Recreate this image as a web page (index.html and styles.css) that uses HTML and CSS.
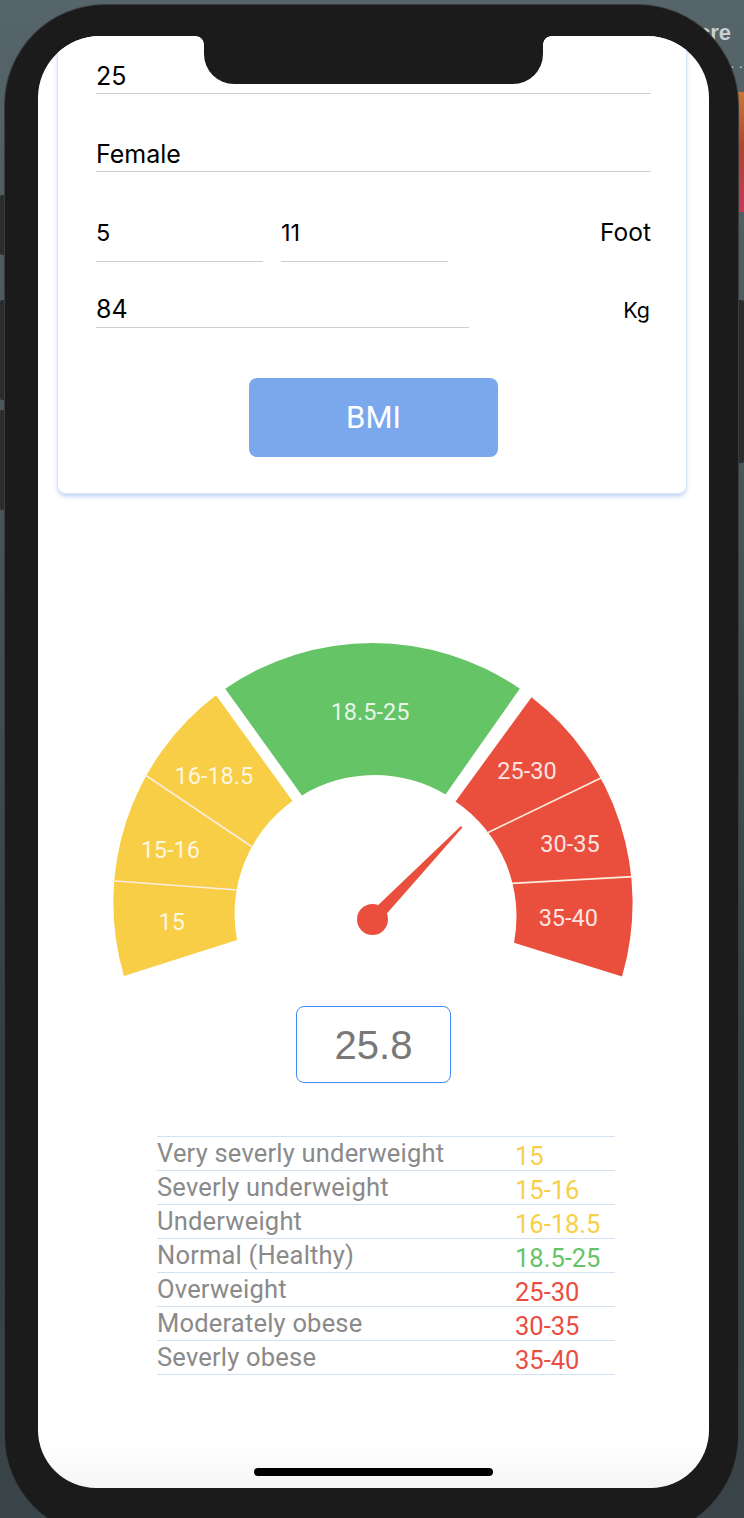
FILE: index.html
```html
<!DOCTYPE html>
<html lang="en">
<head>
<meta charset="utf-8">
<title>BMI</title>
<link rel="stylesheet" href="styles.css">
</head>
<body>
  <div class="desk-text">cre</div>
  <div class="desk-dots">· ·</div>
  <div class="desk-window"></div>
  <div class="side-btn sb1"></div>
  <div class="side-btn sb2"></div>
  <div class="side-btn sb3"></div>
  <div class="side-btn sb4"></div>

  <div class="phone">
    <div class="screen">
      <div class="notch"></div>

      <div class="card">
        <div class="field big">25</div>
        <div class="field big gap-female">Female</div>
        <div class="row-height">
          <div class="field small half">5</div>
          <div class="field small half">11</div>
          <div class="unit foot">Foot</div>
        </div>
        <div class="row-weight">
          <div class="field big weight">84</div>
          <div class="unit kg">Kg</div>
        </div>
        <div class="bmi-btn">BMI</div>
      </div>

      <svg class="gauge" width="544" height="360" viewBox="100 630 544 360" xmlns="http://www.w3.org/2000/svg">
        <path class="seg-yellow" d="M 124 976 A 260 260 0 0 1 216 695.3 L 292.5 801 A 139 139 0 0 0 237 940 Z"/>
        <path class="seg-green" d="M 225.2 688.7 A 260 260 0 0 1 519.8 688.7 L 445.5 794.5 A 139 139 0 0 0 301.9 795.4 Z"/>
        <path class="seg-red" d="M 531.5 697.3 A 260 260 0 0 1 622 976.5 L 514 942.7 A 139 139 0 0 0 455.5 801.5 Z"/>
        <path class="sep" d="M 112 880.7 L 238 890 M 144.5 774.5 L 253 847.5 M 602 777.5 L 486 833.5 M 633 876.6 L 512 883.4"/>
        <text class="glabel" x="171.7" y="930">15</text>
        <text class="glabel" x="170.3" y="858">15-16</text>
        <text class="glabel" x="213.8" y="784">16-18.5</text>
        <text class="glabel" x="370" y="720">18.5-25</text>
        <text class="glabel" x="527" y="779">25-30</text>
        <text class="glabel" x="570" y="851.5">30-35</text>
        <text class="glabel" x="568.3" y="925.5">35-40</text>
        <polygon class="needle" points="377.2,924.4 462.4,827.4 461,826 367.8,914.9"/>
        <circle class="needle" cx="372.5" cy="919.5" r="15.5"/>
      </svg>

      <div class="result">25.8</div>

      <div class="legend">
        <div class="lrow"><span class="lname">Very severly underweight</span><span class="lval c-yellow">15</span></div>
        <div class="lrow"><span class="lname">Severly underweight</span><span class="lval c-yellow">15-16</span></div>
        <div class="lrow"><span class="lname">Underweight</span><span class="lval c-yellow">16-18.5</span></div>
        <div class="lrow"><span class="lname">Normal (Healthy)</span><span class="lval c-green">18.5-25</span></div>
        <div class="lrow"><span class="lname">Overweight</span><span class="lval c-red">25-30</span></div>
        <div class="lrow"><span class="lname">Moderately obese</span><span class="lval c-red">30-35</span></div>
        <div class="lrow"><span class="lname">Severly obese</span><span class="lval c-red">35-40</span></div>
      </div>

      <div class="home-bar"></div>
    </div>
  </div>
</body>
</html>
```

FILE: styles.css
```css
html, body {
  margin: 0;
  padding: 0;
  width: 744px;
  height: 1518px;
  overflow: hidden;
}

body {
  position: relative;
  background: linear-gradient(180deg, #56656a 0%, #46545a 35%, #333e42 70%, #3a4549 100%);
  font-family: Inter, "Noto Sans", sans-serif;
}

/* desktop decorations behind the phone */
.desk-text {
  position: absolute;
  left: 698px;
  top: 20px;
  font-family: "Liberation Sans", sans-serif;
  font-weight: bold;
  font-size: 22px;
  color: #c9cfd1;
}
.desk-dots {
  position: absolute;
  left: 730px;
  top: 58px;
  font-family: "Liberation Sans", sans-serif;
  font-size: 14px;
  color: #c9cfd1;
}
.desk-window {
  position: absolute;
  left: 736px;
  top: 92px;
  width: 8px;
  height: 120px;
  background: linear-gradient(180deg, #c9773a 0%, #b2442f 45%, #c23a58 100%);
}
.side-btn {
  position: absolute;
  width: 8px;
  background: #2c2c2c;
  border-radius: 2px;
}
.sb1 { left: 0; top: 195px; height: 60px; }
.sb2 { left: 0; top: 300px; height: 100px; }
.sb3 { left: 0; top: 410px; height: 100px; }
.sb4 { left: 736px; top: 300px; height: 163px; }

/* phone */
.phone {
  position: relative;
  margin: 5px 0 0 5px;
  width: 733px;
  height: 1531px;
  box-sizing: border-box;
  padding: 31px 0 0 33px;
  background: #1b1b1b;
  border-radius: 100px;
  box-shadow: 0 0 0 1px #3a3d3f;
}

.screen {
  position: relative;
  width: 671px;
  height: 1452px;
  overflow: hidden;
  border-radius: 62px 62px 58px 58px;
  background: linear-gradient(180deg, #ffffff 0%, #ffffff 97%, #f5f5f5 100%);
}

.notch {
  position: absolute;
  left: 166px;
  top: 0;
  width: 339px;
  height: 48px;
  background: #1b1b1b;
  border-radius: 0 0 30px 30px;
  z-index: 5;
}
.notch::before,
.notch::after {
  content: "";
  position: absolute;
  top: 0;
  width: 8px;
  height: 8px;
}
.notch::before {
  left: -8px;
  background: radial-gradient(circle at 0 100%, transparent 7.5px, #1b1b1b 8px);
}
.notch::after {
  right: -8px;
  background: radial-gradient(circle at 100% 100%, transparent 7.5px, #1b1b1b 8px);
}

/* form card */
.card {
  margin: -16px 23px 0 20px;
  padding: 41px 35px 36px 38px;
  background: #ffffff;
  border-radius: 8px;
  box-shadow: 0 0 0 1px #dbe7fa, 0 3px 5px rgba(86, 142, 226, 0.45);
  color: #000;
}

.field {
  border-bottom: 1px solid #cdcdcd;
}
.field.big {
  font-size: 25px;
  line-height: 30px;
  padding-bottom: 2px;
}
.gap-female {
  margin-top: 45px;
}
.row-height {
  display: flex;
  align-items: baseline;
  gap: 18px;
  margin-top: 46px;
  height: 43px;
}
.field.small {
  font-size: 23.5px;
  line-height: 28px;
  padding-bottom: 14px;
}
.half {
  width: 167px;
}
.unit {
  margin-left: auto;
}
.foot {
  font-size: 24.5px;
  line-height: 28px;
}
.row-weight {
  display: flex;
  align-items: baseline;
  margin-top: 33px;
  height: 34px;
}
.field.weight {
  width: 373px;
  padding-bottom: 3px;
}
.kg {
  font-size: 21.5px;
  line-height: 30px;
  margin-right: 1px;
}

.bmi-btn {
  width: 249px;
  height: 79px;
  margin: 50px auto 0;
  background: #7ba8ed;
  border-radius: 8px;
  display: flex;
  align-items: center;
  justify-content: center;
  color: #ffffff;
  font-family: Roboto, sans-serif;
  font-size: 31px;
}

/* gauge */
.gauge {
  display: block;
  margin: 137px 0 0 62px;
}
.seg-yellow { fill: #f7ce46; }
.seg-green { fill: #65c466; }
.seg-red { fill: #ea4f3d; }
.sep {
  stroke: #fbeede;
  stroke-width: 1.6;
  fill: none;
}
.glabel {
  font-family: Roboto, sans-serif;
  font-size: 23.5px;
  fill: rgba(255, 255, 255, 0.86);
  text-anchor: middle;
}
.needle {
  fill: #ea4f3d;
}

/* result box */
.result {
  box-sizing: border-box;
  width: 155px;
  height: 77px;
  margin: 16px auto 0;
  padding-top: 1px;
  border: 1.5px solid #3f8cf5;
  border-radius: 8px;
  display: flex;
  align-items: center;
  justify-content: center;
  font-family: "Liberation Sans", Arial, sans-serif;
  font-size: 40px;
  color: #787878;
}

/* legend table */
.legend {
  width: 458px;
  margin: 53px 0 0 119px;
  border-top: 1px solid #d3e1f6;
  font-family: Roboto, sans-serif;
  font-size: 25.5px;
}
.lrow {
  display: flex;
  height: 33px;
  line-height: 33px;
  border-bottom: 1px solid #d3e1f6;
}
.lname {
  width: 358px;
  color: #8a8a8a;
  letter-spacing: 0.2px;
}
.lval {
  padding-top: 2.5px;
}
.c-yellow { color: #f8cf48; }
.c-green { color: #66c467; }
.c-red { color: #ea4d41; }

.home-bar {
  position: absolute;
  left: 216px;
  bottom: 12px;
  width: 239px;
  height: 8px;
  border-radius: 4px;
  background: #000;
}
```
